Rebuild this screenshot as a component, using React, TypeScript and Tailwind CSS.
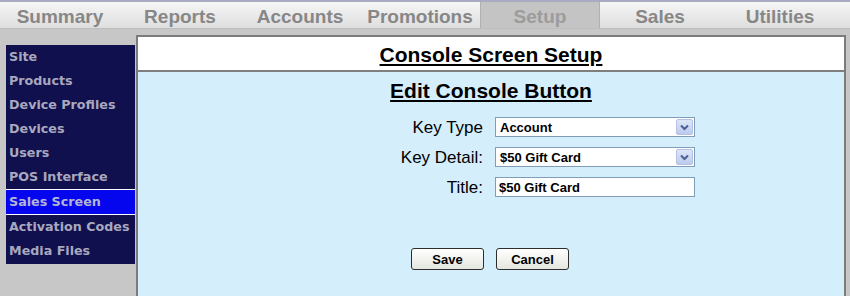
import React from "react";

const tabs = ["Summary", "Reports", "Accounts", "Promotions", "Setup", "Sales", "Utilities"];
const side = ["Site", "Products", "Device Profiles", "Devices", "Users", "POS Interface", "Sales Screen", "Activation Codes", "Media Files"];

function Arrow() {
  return (
    <div className="w-[17px] h-[16px] rounded-[2px] border border-[#b4c2e4] bg-gradient-to-b from-[#dde6f8] to-[#bccaee] flex items-center justify-center">
      <svg width="9" height="7" viewBox="0 0 9 7">
        <path d="M1 1.5 L4.5 5 L8 1.5" fill="none" stroke="#4d5f94" strokeWidth="2" />
      </svg>
    </div>
  );
}

function Select({ value }: { value: string }) {
  return (
    <div className="w-[200px] h-[20px] bg-white border border-[#7f9db9] flex items-center justify-between pl-[4px] pr-[1px]">
      <span className="text-[13px] font-bold text-black leading-none">{value}</span>
      <Arrow />
    </div>
  );
}

export default function App() {
  return (
    <div className="w-[850px] h-[296px] bg-[#c7c7c7] overflow-hidden flex flex-col" style={{ fontFamily: '"Liberation Sans", Arial, sans-serif' }}>
      <div className="h-[2px] bg-[#aaaac4]" />
      <div className="h-[27px] flex bg-gradient-to-b from-[#f6f6f6] to-[#dedede] border-b border-[#bdbdbd]">
        {tabs.map((t) => (
          <div
            key={t}
            className={
              "w-[120px] flex items-center justify-center pt-[3px] text-[19px] font-bold leading-none " +
              (t === "Setup"
                ? "bg-[#c4c4c4] text-[#9c9c9c] border-x border-[#b0b0b0]"
                : "text-[#878787]")
            }
          >
            {t}
          </div>
        ))}
      </div>
      <div className="flex flex-1 pl-[6px]">
        <div className="mt-[16px] w-[129px] h-[219px] bg-[#10104e] flex flex-col" style={{ fontFamily: '"DejaVu Sans", Verdana, sans-serif' }}>
          {side.map((s) =>
            s === "Sales Screen" ? (
              <div key={s} className="h-[26px] bg-[#0505ee] border-y border-white flex items-center pl-[3px] text-[12.7px] font-bold text-[#b4b4d4]">
                {s}
              </div>
            ) : (
              <div key={s} className="h-[24px] flex items-center pl-[3px] text-[12.7px] font-bold text-[#a8a8be]">
                {s}
              </div>
            )
          )}
        </div>
        <div className="ml-[1px] mt-[6px] w-[710px] flex flex-col border-x-2 border-t-2 border-[#7c7c7c]">
          <div className="h-[35px] bg-white border-b-2 border-[#7f7f7f] flex items-center justify-center pt-[2px]">
            <span className="text-[21px] font-bold underline text-black leading-none">Console Screen Setup</span>
          </div>
          <div className="flex-1 bg-[#d4eefc] flex flex-col items-stretch">
            <div className="pt-[8px] h-[34px] flex justify-center">
              <span className="text-[21px] font-bold underline text-black leading-[22px]">Edit Console Button</span>
            </div>
            <div className="flex flex-col gap-[10px] mt-[11px]">
              <div className="flex items-center h-[20px]">
                <div className="w-[345px] text-right text-[17px] text-black leading-none">Key Type</div>
                <div className="ml-[12px]"><Select value="Account" /></div>
              </div>
              <div className="flex items-center h-[20px]">
                <div className="w-[345px] text-right text-[17px] text-black leading-none">Key Detail:</div>
                <div className="ml-[12px]"><Select value="$50 Gift Card" /></div>
              </div>
              <div className="flex items-center h-[20px]">
                <div className="w-[345px] text-right text-[17px] text-black leading-none">Title:</div>
                <div className="ml-[12px] w-[200px] h-[20px] bg-white border border-[#7f9db9] flex items-center pl-[3px]">
                  <span className="text-[13px] font-bold text-black leading-none">$50 Gift Card</span>
                </div>
              </div>
            </div>
            <div className="flex gap-[12px] mt-[51px] pl-[273px]">
              <button className="w-[73px] h-[22px] rounded-[3px] border border-[#2e2e2e] bg-gradient-to-b from-[#ffffff] to-[#e6e6e0] text-[13px] font-bold text-black leading-none">Save</button>
              <button className="w-[73px] h-[22px] rounded-[3px] border border-[#2e2e2e] bg-gradient-to-b from-[#ffffff] to-[#e6e6e0] text-[13px] font-bold text-black leading-none">Cancel</button>
            </div>
          </div>
        </div>
      </div>
    </div>
  );
}
